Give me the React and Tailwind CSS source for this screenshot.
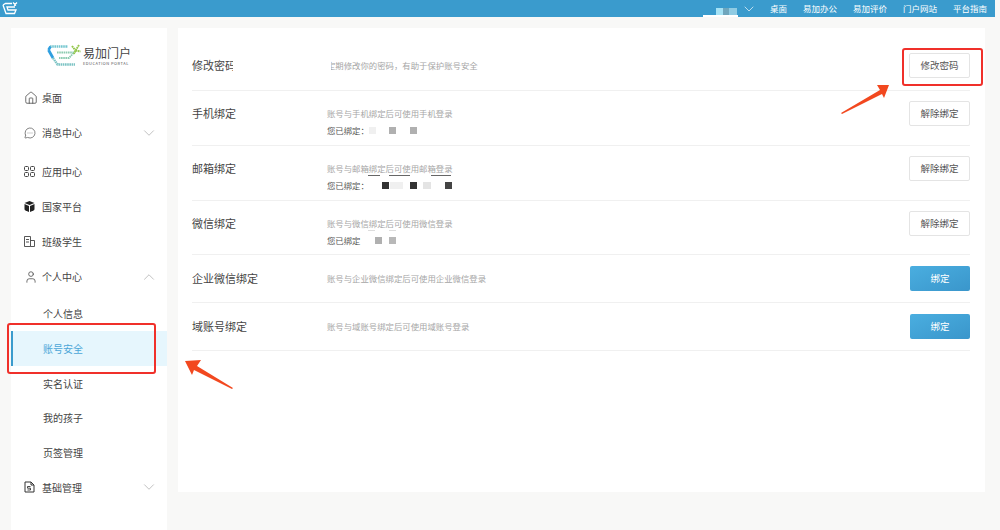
import React from 'react'
import { ChevronDown, ChevronUp, Home, MessageCircleMore, User } from 'lucide-react'

function Logo() {
    return (
        <svg width="34" height="23" viewBox="0 0 34 23" fill="none">
            <path d="M3 2.5 L21 2.5" stroke="#74c6cf" strokeWidth="2.4" strokeDasharray="1.6 0.6" />
            <path d="M1.5 6 L3.5 2.5" stroke="#2f9fe0" strokeWidth="2.6" />
            <path d="M1.5 6 L6 14" stroke="#2f9fe0" strokeWidth="2.8" />
            <path d="M6 14 L10.5 20.5 L28 20.5" stroke="#7cc3c4" strokeWidth="2.4" strokeDasharray="1.6 0.6" />
            <path d="M10 8.5 L27 8.5 L22 14 L12 14" stroke="#8ccbb0" strokeWidth="1.8" strokeDasharray="1.6 0.6" />
            <path d="M25 2 L28.5 6.5 M32 1 L28.5 6.5 L27 10 M28.5 6.5 L33.5 7.5" stroke="#93c64b" strokeWidth="1.9" strokeDasharray="1.8 0.5" />
        </svg>
    )
}

function TopLogo() {
    return (
        <svg width="16" height="13" viewBox="0 0 16 13" fill="none" stroke="#ffffff" strokeWidth="1.3">
            <path d="M1 3 L4 11.5 L12.5 11.5 L14 8 L6 8 L5 5 L13 5" />
            <path d="M1 3 L3.5 1.5 L10 1.5" />
            <path d="M11 0.5 L14 3.5 M15 0.5 L12 3.5" />
        </svg>
    )
}

function GridIcon() {
    return (
        <svg width="11" height="11" viewBox="0 0 11 11" fill="none" stroke="#444" strokeWidth="1">
            <rect x="0.5" y="0.5" width="4" height="4" rx="1" />
            <rect x="6.5" y="0.5" width="4" height="4" rx="1" />
            <rect x="0.5" y="6.5" width="4" height="4" rx="1" />
            <rect x="6.5" y="6.5" width="4" height="4" rx="1" />
        </svg>
    )
}

function BoxIcon() {
    return (
        <svg width="11" height="11" viewBox="0 0 11 11" fill="#222">
            <path d="M5.5 0 L10.5 2 L5.5 4 L0.5 2 Z" />
            <path d="M0.5 3 L5 5 L5 11 L1.5 9.5 Q0.5 9 0.5 8 Z" />
            <path d="M10.5 3 L6 5 L6 11 L9.5 9.5 Q10.5 9 10.5 8 Z" />
        </svg>
    )
}

function ClassIcon() {
    return (
        <svg width="11" height="11" viewBox="0 0 11 11" fill="none" stroke="#444" strokeWidth="0.9">
            <path d="M0.5 0.5 H6.5 V10.5 H0.5 Z" />
            <path d="M6.5 4.5 H10.5 V10.5 H6.5" />
            <path d="M2 3.5 H5 M2 6 H5" />
        </svg>
    )
}

function DocIcon() {
    return (
        <svg width="11" height="12" viewBox="0 0 11 12" fill="none" stroke="#333" strokeWidth="1">
            <path d="M1 1 H7 L10 4 V11 H1 Z" />
            <path d="M7 1 V4 H10" />
            <path d="M6.5 5.5 H3.5 V7.2 H6.5 V9 H3.5" strokeWidth="0.9" />
        </svg>
    )
}

function MenuItem({ icon, label, arrow, className }) {
    return (
        <div className={"flex h-[35px] items-center pl-[13px] pr-[9px] text-[10px] text-[#444] " + (className || "")}>
            <div className="flex w-[18px] items-center justify-start">{icon}</div>
            <span className="flex-1">{label}</span>
            {arrow === 'down' && <ChevronDown size={18} strokeWidth={0.8} color="#999" />}
            {arrow === 'up' && <ChevronUp size={18} strokeWidth={0.8} color="#999" />}
        </div>
    )
}

function SubItem({ label, active }) {
    if (active) {
        return (
            <div className="flex h-[34.7px] items-center border-l-2 border-[#3a9bcd] bg-[#e6f6fd] pl-[30px] text-[10px] text-[#4ba6d8]">
                {label}
            </div>
        )
    }
    return <div className="flex h-[34.7px] items-center pl-[32px] text-[10px] text-[#444]">{label}</div>
}

function Blocks({ items }) {
    return (
        <div className="flex items-center">
            {items.map((b, i) => (
                <span key={i} className="h-[7px]" style={{ marginLeft: b[0], width: b[2] || 7, backgroundColor: b[1] }}></span>
            ))}
        </div>
    )
}

function Row({ title, desc, bound, blocks, button, primary, rowClass, children }) {
    return (
        <div className={"relative flex items-start border-b border-[#f0f0f0] " + rowClass}>
            <div className="w-[135px] text-[11px] leading-[25px] text-[#444]">{title}</div>
            <div className="flex-1 pt-[4px]">
                <div className="text-[8.4px] leading-4 text-[#a6a6a6]">{desc}</div>
                {bound && (
                    <div className="mt-[1px] flex h-4 items-center text-[8.4px] text-[#555]">
                        <span className="w-[40px] whitespace-nowrap">{bound}</span>
                        <Blocks items={blocks} />
                    </div>
                )}
            </div>
            {primary ? (
                <button className="h-[25px] w-[60px] rounded-[2px] bg-gradient-to-br from-[#4aaee0] to-[#3a96cb] text-[9.5px] text-white">
                    {button}
                </button>
            ) : (
                <button className="h-[25px] w-[61px] rounded-[2px] border border-[#e4e4e4] bg-white text-[9.5px] text-[#555]">
                    {button}
                </button>
            )}
            {children}
        </div>
    )
}

export default function App() {
    return (
        <div className="relative h-[530px] w-[1000px] overflow-hidden bg-[#f8f8f7] font-['Noto_Sans_CJK_SC','Noto_Sans',sans-serif]">
            {/* top bar */}
            <div className="flex h-[17px] w-[995px] items-center bg-[#3a9bcd] pl-[2px] pr-[8px] text-[8.5px] text-white">
                <TopLogo />
                <div className="ml-auto flex h-full items-center">
                    <div className="relative mr-[3px] h-full w-[35px]">
                        <div className="absolute bottom-0 left-0 h-[2px] w-[35px] bg-white"></div>
                        <div className="absolute left-[13px] top-[8px] flex">
                            <span className="h-[7px] w-[7px] bg-[#a5e2f5]"></span>
                            <span className="h-[7px] w-[6px] bg-[#6fa6bd]"></span>
                            <span className="h-[7px] w-[8px] bg-[#8fcbe3]"></span>
                        </div>
                    </div>
                    <ChevronDown size={16} strokeWidth={1} color="#ffffff" />
                    <div className="ml-[13px] flex gap-[16px]">
                        <span>桌面</span>
                        <span>易加办公</span>
                        <span>易加评价</span>
                        <span>门户网站</span>
                        <span>平台指南</span>
                    </div>
                </div>
            </div>

            <div className="flex items-start pl-[11px] pt-[11px]">
                {/* sidebar */}
                <div className="flex h-[502px] w-[156px] flex-col bg-white">
                    <div className="flex h-[52px] items-center pl-[36px] pt-[2px]">
                        <Logo />
                        <div className="ml-[2px] flex flex-col">
                            <span className="text-[12px] leading-[15px] text-[#444]">易加门户</span>
                            <span className="text-[4px] leading-[6px] tracking-[0.5px] text-[#555]">EDUCATION PORTAL</span>
                        </div>
                    </div>
                    <MenuItem icon={<Home size={14} strokeWidth={1.3} color="#444" />} label="桌面" />
                    <MenuItem icon={<MessageCircleMore size={12} strokeWidth={1.3} color="#444" />} label="消息中心" arrow="down" />
                    <MenuItem className="mt-1" icon={<GridIcon />} label="应用中心" />
                    <MenuItem icon={<BoxIcon />} label="国家平台" />
                    <MenuItem icon={<ClassIcon />} label="班级学生" />
                    <MenuItem icon={<User size={14} strokeWidth={1.3} color="#444" />} label="个人中心" arrow="up" />
                    <div className="mt-[2.4px]">
                        <SubItem label="个人信息" />
                        <SubItem label="账号安全" active />
                        <SubItem label="实名认证" />
                        <SubItem label="我的孩子" />
                        <SubItem label="页签管理" />
                    </div>
                    <MenuItem icon={<DocIcon />} label="基础管理" arrow="down" />
                </div>

                {/* content */}
                <div className="ml-[11px] h-[464px] w-[807px] bg-white pl-[14px] pr-[15px] pt-[13px]">
                    <Row title="修改密码" desc="定期修改你的密码，有助于保护账号安全" button="修改密码" rowClass="h-[50px] pt-3">
                        <div className="absolute left-[41px] top-[17px] h-[15px] w-[98px] bg-white"></div>
                    </Row>
                    <Row
                        title="手机绑定"
                        desc="账号与手机绑定后可使用手机登录"
                        bound="您已绑定："
                        blocks={[[2, '#f0f0f0'], [13, '#b0b0b0'], [14, '#b0b0b0']]}
                        button="解除绑定"
                        rowClass="h-[55px] pt-[10px]"
                    />
                    <Row
                        title="邮箱绑定"
                        desc="账号与邮箱绑定后可使用邮箱登录"
                        bound="您已绑定："
                        blocks={[[15, '#333333'], [1, '#f0f0f0', 13], [7, '#333333'], [6, '#e4e4e4', 8], [14, '#444444']]}
                        button="解除绑定"
                        rowClass="h-[55px] pt-[10px]"
                    >
                        <span className="absolute left-[176px] top-[29px] h-px w-[12px] bg-[#666]"></span>
                        <span className="absolute left-[197px] top-[29px] h-px w-[21px] bg-[#666]"></span>
                        <span className="absolute left-[239px] top-[29px] h-px w-[20px] bg-[#666]"></span>
                    </Row>
                    <Row
                        title="微信绑定"
                        desc="账号与微信绑定后可使用微信登录"
                        bound="您已绑定"
                        blocks={[[8, '#b0b0b0'], [7, '#b8b8b8']]}
                        button="解除绑定"
                        rowClass="h-[54px] pt-[10px]"
                    >
                        <span className="absolute left-[176px] top-[29px] h-px w-[7px] bg-[#ddd]"></span>
                        <span className="absolute left-[197px] top-[29px] h-px w-[7px] bg-[#ddd]"></span>
                    </Row>
                    <Row title="企业微信绑定" desc="账号与企业微信绑定后可使用企业微信登录" button="绑定" primary rowClass="h-[48px] pt-[11px]" />
                    <Row title="域账号绑定" desc="账号与域账号绑定后可使用域账号登录" button="绑定" primary rowClass="h-[48px] pt-[11px]" />
                </div>
            </div>

            {/* red annotations */}
            <div className="absolute left-[7px] top-[323px] h-[51px] w-[149px] rounded-[3px] border-2 border-[#f0302a]"></div>
            <div className="absolute left-[902px] top-[48px] h-[38px] w-[81px] rounded-[3px] border-2 border-[#f0302a]"></div>
            <svg className="absolute left-[840px] top-[84px]" width="50" height="31" viewBox="840 84 50 31" fill="#f2481f">
                <path d="M889 85 L877 85 L880 90 L841 113 L842 114 L882 94 L884 98 Z" />
            </svg>
            <svg className="absolute left-[184px] top-[359px]" width="50" height="31" viewBox="184 359 50 31" fill="#f2481f">
                <path d="M185 361 L201 360 L197 366 L233 388 L232 389 L194 370 L192 375 Z" />
            </svg>
        </div>
    )
}
